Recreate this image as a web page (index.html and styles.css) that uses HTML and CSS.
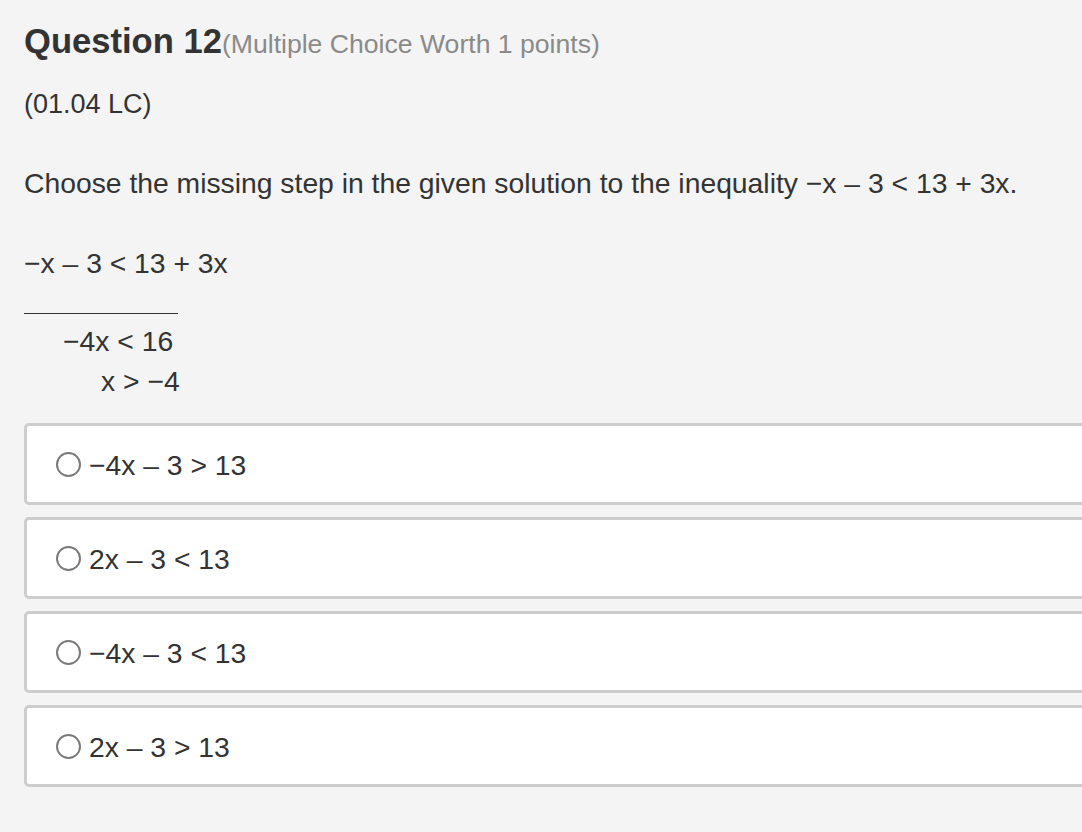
FILE: index.html
```html
<!DOCTYPE html>
<html>
<head>
<meta charset="utf-8">
<link rel="stylesheet" href="styles.css">
</head>
<body>
<div class="page">
  <h1 class="title">Question 12<span class="worth">(Multiple Choice Worth 1 points)</span></h1>
  <p class="line code">(01.04 LC)</p>
  <p class="line prompt">Choose the missing step in the given solution to the inequality −x – 3 &lt; 13 + 3x.</p>
  <p class="line eq">−x – 3 &lt; 13 + 3x</p>
  <div class="blank"></div>
  <p class="line eq step2">−4x &lt; 16</p>
  <p class="line eq step3">x &gt; −4</p>
  <div class="choices">
    <label class="choice"><span class="radio"></span><span class="opt">−4x – 3 &gt; 13</span></label>
    <label class="choice"><span class="radio"></span><span class="opt">2x – 3 &lt; 13</span></label>
    <label class="choice"><span class="radio"></span><span class="opt">−4x – 3 &lt; 13</span></label>
    <label class="choice"><span class="radio"></span><span class="opt">2x – 3 &gt; 13</span></label>
  </div>
</div>
</body>
</html>
```

FILE: styles.css
```css
html, body {
  margin: 0;
  padding: 0;
  background: #f4f4f4;
  overflow: hidden;
}
body {
  font-family: "Liberation Sans", Arial, Helvetica, sans-serif;
  color: #333;
  width: 1082px;
  height: 832px;
}
.page {
  padding: 21px 0 0 24px;
}
.title {
  margin: 0;
  font-size: 34.6px;
  line-height: 40px;
  font-weight: bold;
  color: #333;
}
.worth {
  font-size: 26.6px;
  font-weight: normal;
  color: #8a8a8a;
}
.line {
  margin: 0;
  font-size: 28.3px;
  line-height: 40px;
}
.code {
  margin-top: 20px;
  font-size: 27px;
}
.prompt {
  margin-top: 39px;
}
.eq {
  margin-top: 40px;
}
.blank {
  width: 154px;
  height: 0;
  border-top: 1px solid #333;
  margin-top: 30px;
}
.step2 {
  margin-top: 7px;
  padding-left: 39px;
}
.step3 {
  margin-top: 0;
  padding-left: 77px;
}
.choices {
  margin-top: 22px;
  display: flex;
  flex-direction: column;
  gap: 12px;
  width: 1100px;
}
.choice {
  display: flex;
  align-items: center;
  height: 75px;
  padding-top: 1px;
  background: #fff;
  border: 3px solid #cdcdcd;
  border-radius: 5px;
  padding-left: 29px;
}
.radio {
  width: 21px;
  height: 21px;
  border: 2px solid #7a7a7a;
  border-radius: 50%;
  background: #fff;
  flex: none;
}
.opt {
  margin-left: 8px;
  font-size: 28.3px;
  line-height: 40px;
}
```
